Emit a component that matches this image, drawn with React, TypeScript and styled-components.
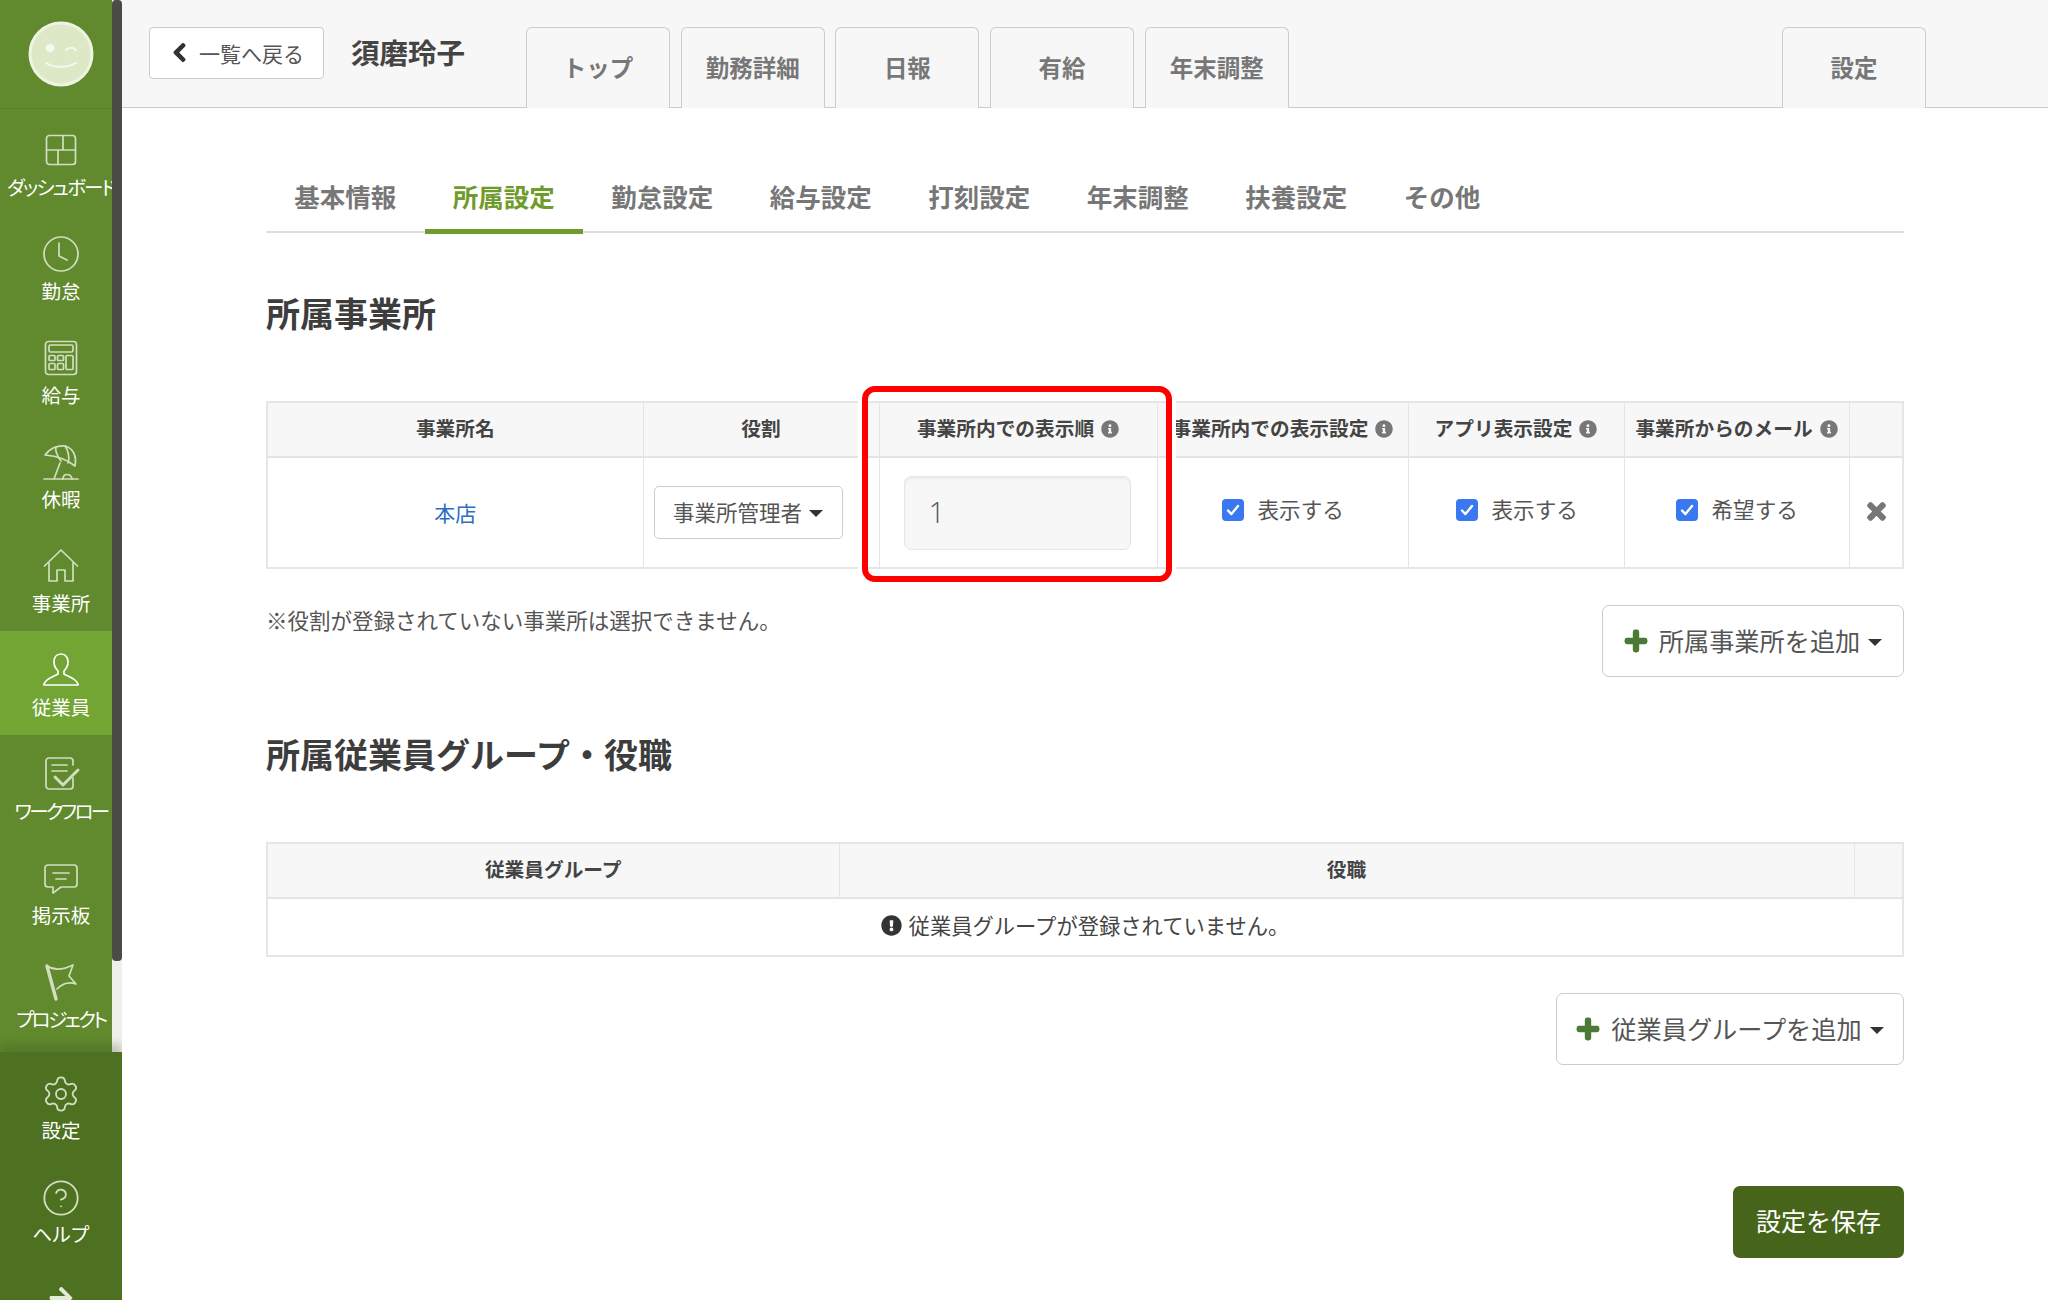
import { FunctionComponent, ReactNode } from 'react';
import styled, { createGlobalStyle } from 'styled-components';
import { FaChevronLeft, FaPlus, FaTimes, FaInfoCircle, FaExclamationCircle, FaArrowRight } from 'react-icons/fa';
import { Settings, CircleHelp } from 'lucide-react';

const GlobalStyle = createGlobalStyle`
  html, body {
    margin: 0;
    background: #fff;
    height: 100%;
  }
  body {
    font-family: "Noto Sans CJK JP", "Noto Sans", sans-serif;
    color: #555;
    overflow: hidden;
  }
  * { box-sizing: border-box; }
`;

const Page = styled.div`
  display: grid;
  grid-template-columns: 122px 1fr;
  width: 2048px;
  height: 1300px;
  overflow: hidden;
`;

/* sidebar */
const Rail = styled.aside`
  display: flex;
  flex-direction: column;
  height: 1300px;
  overflow: hidden;
`;

const RailTop = styled.div`
  position: relative;
  height: 1052px;
  flex: none;
`;

const RailNav = styled.nav`
  width: 122px;
  height: 100%;
  background: #608a2d;
  overflow: hidden;
`;

const ScrollTrack = styled.div`
  position: absolute;
  top: 0;
  right: 0;
  bottom: 0;
  width: 10px;
  background: #eef0ea;
`;

const ScrollThumb = styled.div`
  height: 961px;
  background: #4b4c48;
  border-radius: 4px;
`;

const LogoBox = styled.div`
  height: 109px;
  margin-bottom: 2px;
  display: flex;
  align-items: center;
  justify-content: center;
  padding-bottom: 1px;
  border-bottom: 1px solid #58802a;
`;

const NavItem = styled.a<{ $active?: boolean }>`
  display: flex;
  flex-direction: column;
  align-items: center;
  height: 104px;
  padding-top: 19px;
  background: ${(p) => (p.$active ? '#72a533' : 'transparent')};
  color: ${(p) => (p.$active ? '#fff' : '#d2debf')};
  svg { display: block; }
`;

const NavLabel = styled.span<{ $tight?: number }>`
  margin-top: 4px;
  height: 26px;
  line-height: 25px;
  font-size: 19.5px;
  font-feature-settings: "palt";
  color: #fff;
  white-space: nowrap;
  letter-spacing: ${(p) => p.$tight ?? 0}px;
`;

const RailBottom = styled.div`
  flex: 1;
  background: #4d7021;
  box-shadow: 0 -8px 8px rgba(60, 70, 40, 0.25);
  padding-top: 3px;
  position: relative;
  overflow: hidden;
`;

const BottomLabel = styled(NavLabel)`
  margin-top: 3px;
`;

const ArrowRow = styled.div`
  display: flex;
  justify-content: center;
  padding-top: 22px;
  color: #e3ead6;
  font-size: 26px;
`;

const IconSvg: FunctionComponent<{ children: ReactNode }> = ({ children }) => (
  <svg width="40" height="40" viewBox="0 0 40 40" fill="none" stroke="currentColor" strokeWidth="1.7" strokeLinecap="round" strokeLinejoin="round">
    {children}
  </svg>
);

const DashboardIcon = () => (
  <IconSvg>
    <rect x="5.5" y="5.5" width="29" height="29" rx="3" />
    <path d="M5.5 20h29M22 5.5V20M17 20v14.5" />
  </IconSvg>
);
const ClockIcon = () => (
  <IconSvg>
    <circle cx="20" cy="20" r="17" />
    <path d="M18 9v13l8 4" />
  </IconSvg>
);
const CalcIcon = () => (
  <IconSvg>
    <rect x="4.5" y="3.5" width="31" height="33" rx="3" />
    <rect x="8" y="7" width="24" height="7" rx="1.5" />
    <rect x="8" y="17.5" width="6" height="5" rx="1" />
    <rect x="8" y="25.5" width="6" height="6" rx="1" />
    <rect x="16.5" y="17.5" width="6" height="5" rx="1" />
    <rect x="16.5" y="25.5" width="6" height="6" rx="1" />
    <rect x="25" y="17.5" width="7" height="14" rx="1" />
  </IconSvg>
);
const BeachIcon = () => (
  <IconSvg>
    <path d="M3 37h34M13 37l6-16M4 13C9 6 17 3 24 4c8 2 12 10 10 20-7-6-19-10-30-11z" />
    <path d="M15 5c-1 3 1 9 5 14M24 4c3 4 5 11 3 17" />
    <path d="M22 37c0-6 8-6 9 0" />
  </IconSvg>
);
const HomeIcon = () => (
  <IconSvg>
    <path d="M3.5 20L20 4l16.5 16M8 17v18h8V24h8v11h8V17" />
  </IconSvg>
);
const UserIcon = () => (
  <IconSvg>
    <path d="M20 4c-5 0-7 4-7 8 0 4 2 7 4 9v3c-3 2-12 4-14 10v1h34v-1c-2-6-11-8-14-10v-3c2-2 4-5 4-9 0-4-2-8-7-8z" />
  </IconSvg>
);
const FlowIcon = () => (
  <IconSvg>
    <path d="M32 24v8a3 3 0 0 1-3 3H8a3 3 0 0 1-3-3V7a3 3 0 0 1 3-3h21a3 3 0 0 1 3 3v4" />
    <path d="M11 11h15M11 17h15" />
    <path d="M14 23l8 8 15-15" strokeWidth="3" />
  </IconSvg>
);
const ChatIcon = () => (
  <IconSvg>
    <path d="M7 7h26a3 3 0 0 1 3 3v16a3 3 0 0 1-3 3H20l-8 6v-6H7a3 3 0 0 1-3-3V10a3 3 0 0 1 3-3z" />
    <path d="M12 15h16M15 21h10" />
  </IconSvg>
);
const FlagIcon = () => (
  <IconSvg>
    <path d="M6 4l9 33" strokeWidth="3.4" />
    <path d="M6 4c8 5 16 4 26-1l-4 11 7 8c-8-3-14 0-19 5" />
  </IconSvg>
);

const Face = () => (
  <svg width="66" height="66" viewBox="0 0 66 66">
    <circle cx="33" cy="33" r="31" fill="#dde9c6" stroke="#eef4e4" strokeWidth="3" />
    <ellipse cx="22" cy="27" rx="4.5" ry="4" fill="#f6f9ef" />
    <path d="M38 29c3-3 7-3 10 0" fill="none" stroke="#f6f9ef" strokeWidth="2" strokeLinecap="round" />
    <path d="M18 42c8 5 21 5 30 0" fill="none" stroke="#f6f9ef" strokeWidth="2" strokeLinecap="round" />
  </svg>
);

/* main */
const Main = styled.main`
  min-width: 0;
`;

const TopBar = styled.header`
  display: flex;
  height: 108px;
  padding: 27px 122px 0 27px;
  background: #f7f7f7;
  border-bottom: 1px solid #ccc;
`;

const BackButton = styled.a`
  display: flex;
  align-items: center;
  gap: 9px;
  width: 175px;
  height: 52px;
  flex: none;
  padding-left: 19px;
  padding-bottom: 1px;
  background: #fff;
  border: 1px solid #ccc;
  border-radius: 4px;
  font-size: 21px;
  color: #555;
  white-space: nowrap;
  svg {
    flex: none;
    color: #333;
    font-size: 21px;
    stroke: currentColor;
    stroke-width: 30;
  }
`;

const PersonName = styled.div`
  width: 175px;
  flex: none;
  margin-left: 27px;
  height: 52px;
  line-height: 50px;
  font-size: 28.5px;
  font-weight: 700;
  color: #444;
`;

const PageTabs = styled.div`
  display: flex;
  flex: 1;
  gap: 10.7px;
`;

const PageTab = styled.a<{ $end?: boolean }>`
  display: block;
  width: 144px;
  height: 81px;
  padding-top: 19px;
  line-height: 40px;
  margin-left: ${(p) => (p.$end ? 'auto' : '0')};
  text-align: center;
  font-size: 23.5px;
  font-weight: 700;
  color: #777;
  background: #f7f7f7;
  border: 1px solid #ccc;
  border-bottom: none;
  border-radius: 6px 6px 0 0;
`;

const Content = styled.div`
  padding: 0 144px;
`;

const SubTabs = styled.div`
  display: flex;
  margin-top: 70px;
  height: 55px;
  border-bottom: 2px solid #ddd;
`;

const SubTab = styled.a<{ $active?: boolean }>`
  display: block;
  height: 56px;
  padding: 0 28.25px;
  flex: none;
  line-height: 36px;
  font-size: 25.5px;
  font-weight: 700;
  color: ${(p) => (p.$active ? '#6f9b2c' : '#777')};
  border-bottom: 5px solid ${(p) => (p.$active ? '#6f9b2c' : 'transparent')};
  border-radius: 4px 4px 0 0;
`;

const SectionTitle = styled.h2<{ $top: number }>`
  margin: ${(p) => p.$top}px 0 63px;
  font-size: 34px;
  line-height: 46px;
  padding-bottom: 2px;
  font-weight: 700;
  color: #3d3d3d;
`;

const TableWrap = styled.div`
  position: relative;
`;

const DataTable = styled.table`
  width: 100%;
  table-layout: fixed;
  border-collapse: collapse;
  border: 2px solid #e6e6e6;
`;

const Col = styled.col<{ $w?: number }>`
  width: ${(p) => (p.$w ? `${p.$w}px` : 'auto')};
`;

const HeadCell = styled.th`
  height: 55px;
  padding: 0 0 4px;
  background: #f7f7f7;
  border: 1px solid #e4e4e4;
  border-bottom: 2px solid #e4e4e4;
  font-size: 19.7px;
  font-weight: 700;
  color: #444;
  white-space: nowrap;
  overflow: hidden;
  svg {
    margin-left: 7px;
    color: #777;
    font-size: 18px;
    vertical-align: -2px;
  }
`;

const BodyCell = styled.td<{ $height?: number }>`
  height: ${(p) => p.$height ?? 111}px;
  padding: 0;
  border: 1px solid #e4e4e4;
  text-align: center;
  font-size: 20px;
  color: #555;
`;

const OfficeLink = styled.a`
  display: inline-block;
  margin-top: -5px;
  color: #2b6cc4;
  font-size: 21px;
`;

const Caret = styled.i`
  display: inline-block;
  flex: none;
  width: 0;
  height: 0;
  margin: 4px 0 0 7px;
  border-top: 7px solid #333;
  border-left: 7px solid transparent;
  border-right: 7px solid transparent;
`;

const RoleSelect = styled.a`
  display: flex;
  align-items: center;
  justify-content: center;
  width: 189px;
  height: 53px;
  margin-left: 10px;
  padding-bottom: 2px;
  background: #fff;
  border: 1px solid #ccc;
  border-radius: 5px;
  font-size: 21.5px;
  color: #555;
  white-space: nowrap;
`;

const OrderInput = styled.div`
  width: 227px;
  height: 74px;
  margin-left: 24px;
  padding-left: 24px;
  line-height: 70px;
  text-align: left;
  font-family: "Open Sans", sans-serif;
  font-size: 29px;
  font-weight: 300;
  color: #555;
  background: #f7f7f7;
  border: 1px solid #e6e6e6;
  border-radius: 7px;
  box-shadow: inset 0 2px 2px rgba(0, 0, 0, 0.05);
`;

const CheckLabel = styled.label<{ $left: number }>`
  display: flex;
  align-items: center;
  gap: 14px;
  padding-left: ${(p) => p.$left}px;
  margin-top: -5px;
  font-size: 21.6px;
  color: #555;
`;

const CheckText = styled.span`
  margin-top: -4px;
`;

const CheckMark = styled.span`
  display: flex;
  align-items: center;
  justify-content: center;
  width: 22px;
  height: 22px;
  background: #3a78f2;
  border-radius: 4px;
`;

const RemoveIcon = styled.span`
  position: relative;
  top: -1px;
  left: 1px;
  display: block;
  color: #777;
  font-size: 25px;
  svg {
    display: block;
    margin: 0 auto;
    stroke: currentColor;
    stroke-width: 30;
  }
`;

const Highlight = styled.div`
  position: absolute;
  left: 596px;
  top: -15px;
  width: 310px;
  height: 196px;
  border: 6px solid #f00;
  border-radius: 13px;
  box-shadow: 0 0 0 4px #fff;
  pointer-events: none;
`;

const ActionRow = styled.div`
  display: flex;
  justify-content: space-between;
  align-items: flex-start;
  margin-top: 36px;
`;

const Note = styled.p`
  margin: 1px 0 0;
  font-size: 21.5px;
  line-height: 28px;
  color: #555;
`;

const AddButton = styled.a<{ $width: number }>`
  display: flex;
  align-items: center;
  justify-content: center;
  width: ${(p) => p.$width}px;
  height: 72px;
  margin-left: auto;
  padding-bottom: 2px;
  background: #fff;
  border: 1px solid #ccc;
  border-radius: 7px;
  font-size: 25.2px;
  color: #555;
  white-space: nowrap;
  svg {
    flex: none;
    margin: 2px 11px 0 0;
    color: #4a7a35;
    font-size: 24px;
    stroke: currentColor;
    stroke-width: 40;
  }
  ${Caret} { margin-left: 8px; }
`;

const EmptyMessage = styled.span`
  display: inline-flex;
  align-items: center;
  gap: 7px;
  margin-top: -3px;
  font-size: 21.3px;
  color: #444;
  svg { color: #333; font-size: 21px; margin-top: 3px; }
`;

const SaveRow = styled.div`
  display: flex;
  justify-content: flex-end;
  margin-top: 121px;
`;

const SaveButton = styled.a`
  display: block;
  width: 171px;
  height: 72px;
  line-height: 68px;
  text-align: center;
  background: #46651b;
  border-radius: 7px;
  font-size: 25px;
  color: #fff;
`;

const navItems = [
  { label: 'ダッシュボード', icon: <DashboardIcon />, tight: -1.9 },
  { label: '勤怠', icon: <ClockIcon /> },
  { label: '給与', icon: <CalcIcon /> },
  { label: '休暇', icon: <BeachIcon /> },
  { label: '事業所', icon: <HomeIcon /> },
  { label: '従業員', icon: <UserIcon />, active: true },
  { label: 'ワークフロー', icon: <FlowIcon />, tight: -2.6 },
  { label: '掲示板', icon: <ChatIcon /> },
  { label: 'プロジェクト', icon: <FlagIcon />, tight: -2.5 },
];

const pageTabs = ['トップ', '勤務詳細', '日報', '有給', '年末調整'];
const subTabs = ['基本情報', '所属設定', '勤怠設定', '給与設定', '打刻設定', '年末調整', '扶養設定', 'その他'];

const Check = () => (
  <CheckMark>
    <svg width="16" height="16" viewBox="0 0 16 16" fill="none" stroke="#fff" strokeWidth="2.4" strokeLinecap="round" strokeLinejoin="round">
      <path d="M3 8.5l3.4 3.6L13 4" />
    </svg>
  </CheckMark>
);

const App: FunctionComponent = () => {
  return (
    <Page>
      <GlobalStyle />
      <Rail>
        <RailTop>
          <RailNav>
            <LogoBox>
              <Face />
            </LogoBox>
            {navItems.map((item) => (
              <NavItem key={item.label} $active={item.active}>
                {item.icon}
                <NavLabel $tight={item.tight}>{item.label}</NavLabel>
              </NavItem>
            ))}
          </RailNav>
          <ScrollTrack>
            <ScrollThumb />
          </ScrollTrack>
        </RailTop>
        <RailBottom>
          <NavItem>
            <Settings size={40} strokeWidth={1.1} />
            <BottomLabel>設定</BottomLabel>
          </NavItem>
          <NavItem>
            <CircleHelp size={40} strokeWidth={1.1} />
            <BottomLabel $tight={0.5}>ヘルプ</BottomLabel>
          </NavItem>
          <ArrowRow>
            <FaArrowRight />
          </ArrowRow>
        </RailBottom>
      </Rail>
      <Main>
        <TopBar>
          <BackButton>
            <FaChevronLeft />
            一覧へ戻る
          </BackButton>
          <PersonName>須磨玲子</PersonName>
          <PageTabs>
            {pageTabs.map((t) => (
              <PageTab key={t}>{t}</PageTab>
            ))}
            <PageTab $end>設定</PageTab>
          </PageTabs>
        </TopBar>
        <Content>
          <SubTabs>
            {subTabs.map((t) => (
              <SubTab key={t} $active={t === '所属設定'}>
                {t}
              </SubTab>
            ))}
          </SubTabs>
          <SectionTitle $top={57}>所属事業所</SectionTitle>
          <TableWrap>
            <DataTable>
              <colgroup>
                <Col $w={376} />
                <Col $w={236} />
                <Col $w={278} />
                <Col $w={251} />
                <Col $w={216} />
                <Col $w={225} />
                <Col />
              </colgroup>
              <thead>
                <tr>
                  <HeadCell>事業所名</HeadCell>
                  <HeadCell>役割</HeadCell>
                  <HeadCell>
                    事業所内での表示順
                    <FaInfoCircle />
                  </HeadCell>
                  <HeadCell>
                    事業所内での表示設定
                    <FaInfoCircle />
                  </HeadCell>
                  <HeadCell>
                    アプリ表示設定
                    <FaInfoCircle />
                  </HeadCell>
                  <HeadCell>
                    事業所からのメール
                    <FaInfoCircle />
                  </HeadCell>
                  <HeadCell />
                </tr>
              </thead>
              <tbody>
                <tr>
                  <BodyCell>
                    <OfficeLink>本店</OfficeLink>
                  </BodyCell>
                  <BodyCell>
                    <RoleSelect>
                      事業所管理者
                      <Caret />
                    </RoleSelect>
                  </BodyCell>
                  <BodyCell>
                    <OrderInput>1</OrderInput>
                  </BodyCell>
                  <BodyCell>
                    <CheckLabel $left={64}>
                      <Check />
                      <CheckText>表示する</CheckText>
                    </CheckLabel>
                  </BodyCell>
                  <BodyCell>
                    <CheckLabel $left={47}>
                      <Check />
                      <CheckText>表示する</CheckText>
                    </CheckLabel>
                  </BodyCell>
                  <BodyCell>
                    <CheckLabel $left={51}>
                      <Check />
                      <CheckText>希望する</CheckText>
                    </CheckLabel>
                  </BodyCell>
                  <BodyCell>
                    <RemoveIcon>
                      <FaTimes />
                    </RemoveIcon>
                  </BodyCell>
                </tr>
              </tbody>
            </DataTable>
            <Highlight />
          </TableWrap>
          <ActionRow>
            <Note>※役割が登録されていない事業所は選択できません。</Note>
            <AddButton $width={302}>
              <FaPlus />
              所属事業所を追加
              <Caret />
            </AddButton>
          </ActionRow>
          <SectionTitle $top={54}>所属従業員グループ・役職</SectionTitle>
          <DataTable>
            <colgroup>
              <Col $w={572} />
              <Col $w={1015} />
              <Col />
            </colgroup>
            <thead>
              <tr>
                <HeadCell>従業員グループ</HeadCell>
                <HeadCell>役職</HeadCell>
                <HeadCell />
              </tr>
            </thead>
            <tbody>
              <tr>
                <BodyCell colSpan={3} $height={58}>
                  <EmptyMessage>
                    <FaExclamationCircle />
                    従業員グループが登録されていません。
                  </EmptyMessage>
                </BodyCell>
              </tr>
            </tbody>
          </DataTable>
          <ActionRow>
            <AddButton $width={348}>
              <FaPlus />
              従業員グループを追加
              <Caret />
            </AddButton>
          </ActionRow>
          <SaveRow>
            <SaveButton>設定を保存</SaveButton>
          </SaveRow>
        </Content>
      </Main>
    </Page>
  );
};

export default App;
